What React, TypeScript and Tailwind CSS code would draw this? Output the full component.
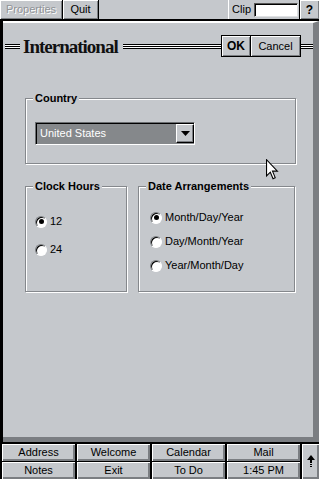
import React from 'react';

const gray = 'bg-[#c5c8cc]';
const raised = 'bg-[#c5c8cc] shadow-[inset_1px_1px_0_#fff,inset_-1px_-1px_0_#7b7e82]';
const navBtn =
  'bg-[#c5c8cc] shadow-[inset_1px_1px_0_#fff,inset_-2px_-2px_0_#7b7e82] flex items-center justify-center pb-[1px]';

const Lines = ({ className = '' }: { className?: string }) => (
  <div className={`flex flex-col ${className}`}>
    <div className="h-[1px] bg-black" />
    <div className="h-[1px] bg-white" />
    <div className="h-[1px] bg-black" />
    <div className="h-[1px] bg-white" />
    <div className="h-[1px] bg-black" />
  </div>
);

const Radio = ({ checked, label }: { checked?: boolean; label: string }) => (
  <div className="flex items-center h-[13px]">
    <div className="w-[12px] h-[12px] rounded-full bg-white border border-t-[#7b7e82] border-l-[#7b7e82] border-b-white border-r-white shadow-[inset_1px_1px_0_#000] flex items-center justify-center">
      {checked && <div className="w-[5px] h-[5px] rounded-full bg-black" />}
    </div>
    <span className="ml-[3px] text-[11px] leading-none">{label}</span>
  </div>
);

const Group = ({
  title,
  className,
  children,
}: {
  title: string;
  className: string;
  children: React.ReactNode;
}) => (
  <fieldset
    className={`border border-[#85888c] shadow-[1px_1px_0_#fff,inset_1px_1px_0_#fff] ${className}`}
  >
    <legend className={`ml-[7px] px-[2px] text-[11px] font-bold leading-[14px] ${gray}`}>{title}</legend>
    {children}
  </fieldset>
);

export default function App() {
  return (
    <div className="w-[319px] h-[479px] bg-black flex flex-col overflow-hidden font-['Liberation_Sans',Arial,sans-serif] text-black">
      {/* top bar */}
      <div className="flex h-[21px] shrink-0 gap-[1px] pb-[2px] text-[11px]">
        <div className={`w-[62px] ${raised} flex items-center justify-center text-[#909397] [text-shadow:1px_1px_0_#fff]`}>
          Properties
        </div>
        <div className={`w-[35px] ${raised} flex items-center justify-center`}>Quit</div>
        <div className={`flex-1 ${gray} flex justify-end`}>
          <div className="flex items-center border-l border-white pl-[3px] pr-[1px] gap-[3px]">
            <span>Clip</span>
            <div className="w-[44px] h-[14px] bg-white border border-t-[#555] border-l-[#555] border-b-[#dfe1e3] border-r-[#dfe1e3] shadow-[inset_1px_1px_0_#000]" />
          </div>
        </div>
        <div className={`w-[19px] ${raised} flex items-center justify-center font-bold text-[12px]`}>?</div>
      </div>

      {/* main panel */}
      <div className={`relative flex-1 ml-[3px] ${gray} border-t-2 border-t-white border-r-[6px] border-r-[#7b7e82] border-b-[5px] border-b-[#7b7e82] flex flex-col`}>
        <div className="flex items-center h-[22px] mt-[12px] pl-[2px]">
          <Lines className="w-[15px]" />
          <span className="ml-[3px] mr-[5px] font-['Liberation_Serif',serif] font-bold text-[19px] tracking-[-1px] leading-none text-[#111]">
            International
          </span>
          <Lines className="flex-1" />
          <div className="flex h-[22px] text-[11px]">
            <div className="w-[30px] border border-black shadow-[inset_1px_1px_0_#fff,inset_-1px_-1px_0_#7b7e82] flex items-center justify-center font-bold text-[12px]">
              OK
            </div>
            <div className="w-[50px] border border-l-0 border-black shadow-[inset_1px_1px_0_#fff,inset_-1px_-1px_0_#7b7e82] flex items-center justify-center">
              Cancel
            </div>
          </div>
          <Lines className="w-[12px]" />
        </div>

        <Group title="Country" className="mt-[34px] ml-[22px] w-[271px] h-[73px]">
          <div className="pl-[9px] pt-[17px]">
            <div className="w-[160px] h-[23px] bg-[#85888b] border border-t-[#6b6e71] border-l-[#6b6e71] border-b-white border-r-white shadow-[inset_1px_1px_0_#000] flex items-center">
              <span className="flex-1 pl-[4px] text-white text-[11px] leading-none">United States</span>
              <div className={`w-[18px] h-[19px] ${gray} border border-t-white border-l-white border-b-black border-r-black shadow-[inset_-1px_-1px_0_#7b7e82] flex items-center justify-center`}>
                <svg width="9" height="5" viewBox="0 0 9 5">
                  <path d="M0 0H9L4.5 5Z" fill="#000" />
                </svg>
              </div>
            </div>
          </div>
        </Group>

        <div className="flex gap-[11px] ml-[22px] mt-[15px]">
          <Group title="Clock Hours" className="w-[102px] h-[113px]">
            <div className="pl-[9px] pt-[22px] flex flex-col gap-[15px]">
              <Radio checked label="12" />
              <Radio label="24" />
            </div>
          </Group>
          <Group title="Date Arrangements" className="w-[157px] h-[113px]">
            <div className="pl-[11px] pt-[18px] flex flex-col gap-[11px]">
              <Radio checked label="Month/Day/Year" />
              <Radio label="Day/Month/Year" />
              <Radio label="Year/Month/Day" />
            </div>
          </Group>
        </div>

        {/* mouse pointer */}
        <svg className="absolute left-[263px] top-[136px]" width="13" height="21" viewBox="0 0 12 19">
          <path d="M0.5 0.5V15.5L4 12L6.5 18L8.5 17L6 11H10.5Z" fill="#fff" stroke="#000" strokeWidth="1" strokeLinejoin="miter" />
        </svg>
      </div>

      {/* bottom nav */}
      <div className="mt-[1px] h-[36px] shrink-0 grid grid-cols-[73px_73px_73px_73px_17px] grid-rows-[17px_17px] gap-x-[2px] gap-y-[1px] pt-[1px] pl-[2px] text-[11px] leading-none">
        <div className={navBtn}>Address</div>
        <div className={navBtn}>Welcome</div>
        <div className={navBtn}>Calendar</div>
        <div className={navBtn}>Mail</div>
        <div className={`${navBtn} row-span-2`}>
          <svg width="8" height="13" viewBox="0 0 8 13">
            <path d="M0 5L4 0L8 5Z" fill="#000" />
            <rect x="3" y="5" width="2" height="3" fill="#000" />
            <rect x="3" y="9" width="2" height="1" fill="#000" />
            <rect x="3" y="11" width="2" height="1" fill="#000" />
          </svg>
        </div>
        <div className={navBtn}>Notes</div>
        <div className={navBtn}>Exit</div>
        <div className={navBtn}>To Do</div>
        <div className={navBtn}>1:45 PM</div>
      </div>
    </div>
  );
}
